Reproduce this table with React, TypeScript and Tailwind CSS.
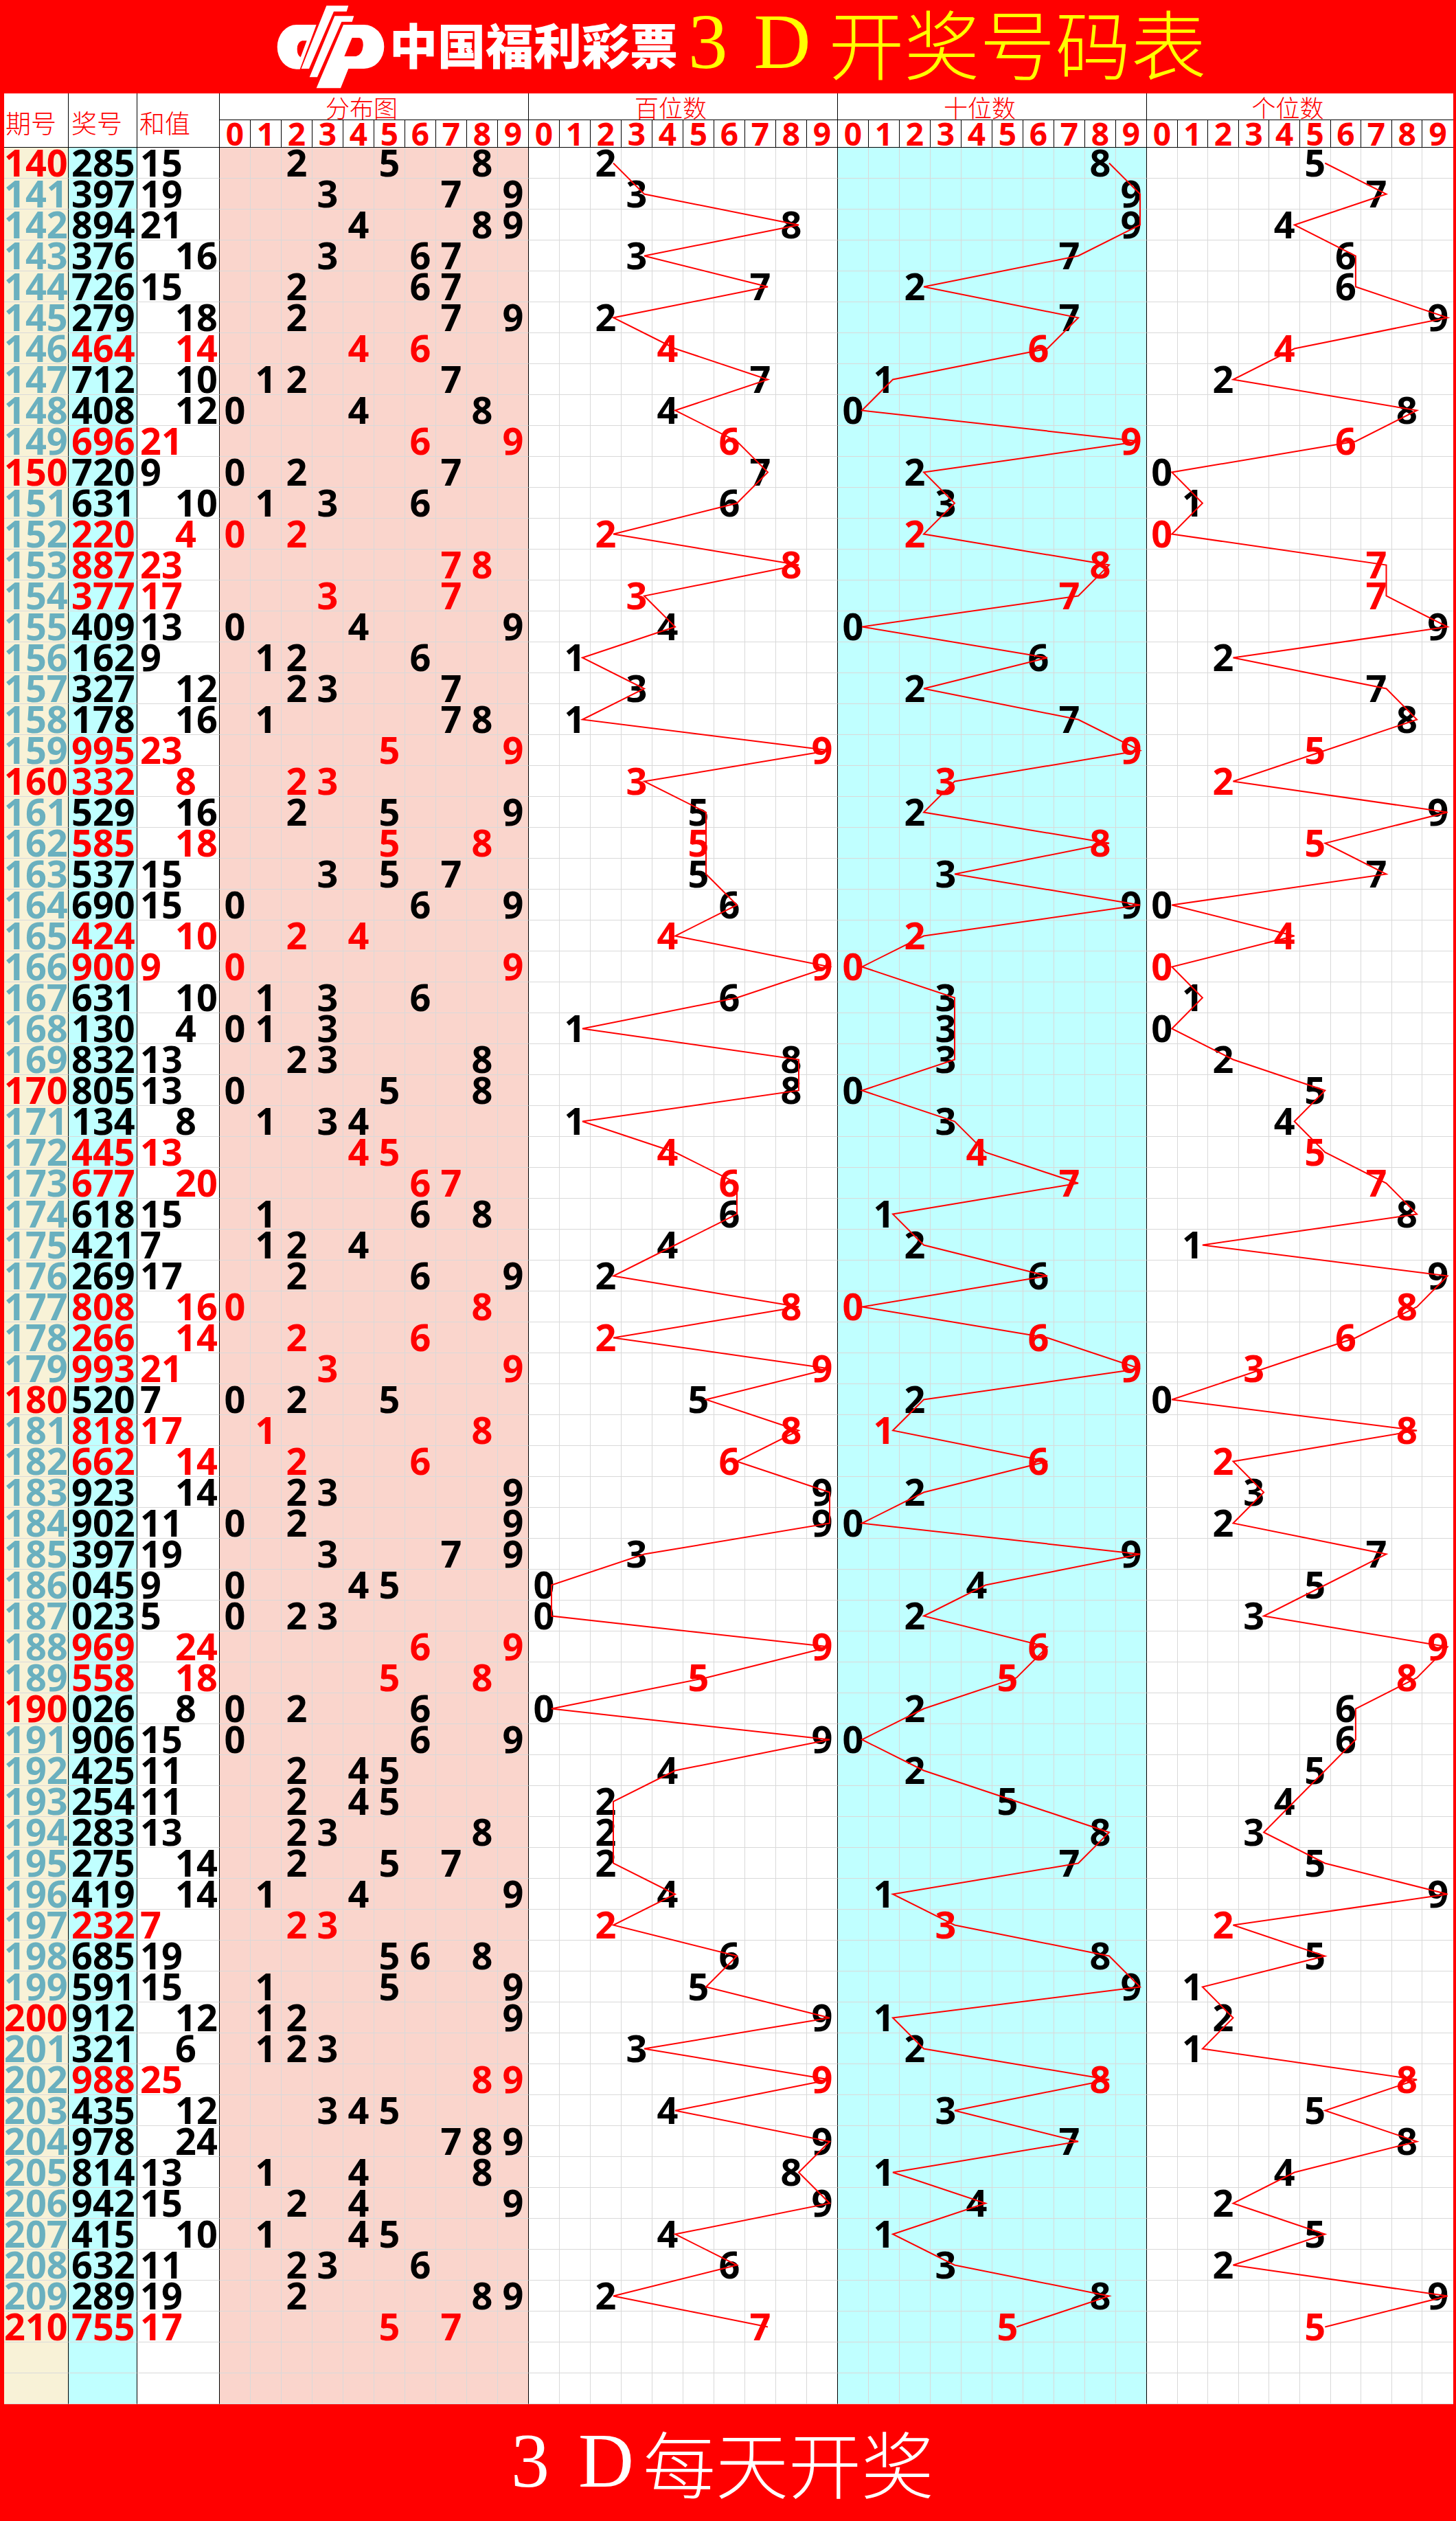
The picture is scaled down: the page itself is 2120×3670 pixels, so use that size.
import React from 'react';
import clsx from 'clsx';

// draws 140..210, one 3-digit result each
const NUMS =
  '285 397 894 376 726 279 464 712 408 696 720 631 220 887 377 409 162 327 178 995 332 529 585 537 690 424 900 631 130 832 805 134 445 677 618 421 269 808 266 993 520 818 662 923 902 397 045 023 969 558 026 906 425 254 283 275 419 232 685 591 912 321 988 435 978 814 942 415 632 289 755'.split(
    ' '
  );
const FIRST_ISSUE = 140;
const EMPTY_ROWS = 2;
const ROW_H = 45;

// left edge of each 10-column block, measured inside the table (table starts 6px in)
const BLOCK_X = [314, 764, 1214, 1664];
const CELL_W = [45, 45, 45, 44.6];
const LINE_NUDGE = [0, 10.5, 12.5, 14];

const NUM = "font-['Open_Sans','Liberation_Sans',sans-serif] font-bold";
const KAI = "font-['Noto_Sans_CJK_SC',sans-serif]";
const SERIF = "font-['Liberation_Serif','Noto_Sans_CJK_SC',serif]";

const BLOCKS = [
  { label: '分布图', bg: 'bg-[#fad5cc]' },
  { label: '百位数', bg: 'bg-white' },
  { label: '十位数', bg: 'bg-[#c0ffff]' },
  { label: '个位数', bg: 'bg-white' },
];
const DIGITS = [0, 1, 2, 3, 4, 5, 6, 7, 8, 9];

const Logo = () => (
  <svg viewBox="0 0 510 408" className="ml-[390px] h-[136px] w-[170px] shrink-0">
    <path d="M212,108 L125,108 A84 97 0 0 0 125,302 L140,302 Z" fill="#fff" />
    <path d="M170,178 L150,178 Q128,185 128,214 Q128,245 145,250 L143,250 Z" fill="#ff0000" />
    <path d="M256,25 L352,25 L344,50 L288,50 L180,300 L146,300 Z" fill="#fff" />
    <path d="M292,70 L376,70 L368,95 L322,95 L216,337 L182,337 Z" fill="#fff" />
    <path d="M330,108 L420,108 A88 96 0 0 1 420,300 L352,300 L318,385 L212,385 Z" fill="#fff" />
    <path d="M368,165 L400,165 Q418,170 416,200 Q412,240 385,246 L334,246 Z" fill="#ff0000" />
  </svg>
);

const TableHead = () => (
  <div className="flex h-[79px] border-b border-black bg-white">
    <div className={clsx(KAI, 'flex w-[94px] shrink-0 items-center border-r border-black pt-[7px] pl-[2px] text-[37px] leading-none font-light text-[#ff0000]')}>期号</div>
    <div className={clsx(KAI, 'flex w-[100px] shrink-0 items-center border-r border-black pt-[7px] pl-[4px] text-[37px] leading-none font-light text-[#ff0000]')}>奖号</div>
    <div className={clsx(KAI, 'flex w-[120px] shrink-0 items-center border-r border-black pt-[7px] pl-[3px] text-[37px] leading-none font-light text-[#ff0000]')}>和值</div>
    {BLOCKS.map((b, bi) => (
      <div key={b.label} className="flex flex-col">
        <div
          className={clsx(
            KAI,
            'flex h-[39px] items-center justify-center border-b border-black pr-[36px] text-[35px] leading-none font-light text-[#ff0000]',
            bi < 3 && 'border-r'
          )}
        >
          {b.label}
        </div>
        <div className="flex">
          {DIGITS.map((d) => (
            <div
              key={d}
              className={clsx(
                NUM,
                'flex h-[39px] shrink-0 justify-center text-[46px] leading-[39px] text-[#ff0000]',
                bi === 3 ? 'w-[44.6px]' : 'w-[45px]',
                bi === 3 && d === 9 ? 'border-r-0' : 'border-r border-r-black'
              )}
            >
              {d}
            </div>
          ))}
        </div>
      </div>
    ))}
  </div>
);

const DataRow = ({ num, issue }: { num?: string; issue?: number }) => {
  const ds = num ? num.split('').map(Number) : [];
  const pair = ds.length === 3 && new Set(ds).size < 3;
  const ink = pair ? 'text-[#ff0000]' : 'text-black';
  const sum = ds.reduce((a, b) => a + b, 0);
  const cell = 'h-[45px] shrink-0 border-b border-b-[#d9d9d9] leading-[42px] whitespace-nowrap';

  return (
    <div className={clsx('flex text-[54px]', NUM)}>
      <div
        className={clsx(
          cell,
          'w-[94px] border-r border-r-black bg-[#f8f2d7]',
          issue !== undefined && issue % 10 === 0 ? 'text-[#ff0000]' : 'text-[#6ab0bf]'
        )}
      >
        {issue}
      </div>
      <div className={clsx(cell, 'w-[100px] border-r border-r-black bg-[#c0ffff] pl-[4px]', ink)}>{num}</div>
      {/* odd sums sit in the left half of the column, even sums in the right half */}
      <div className={clsx(cell, 'w-[120px] border-r border-r-black bg-white', sum % 2 ? 'pl-[4px]' : 'pl-[55px]', ink)}>
        {num ? sum : ''}
      </div>
      {BLOCKS.map((b, bi) => (
        <div key={b.label} className="flex">
          {DIGITS.map((d) => {
            const show = bi === 0 ? ds.includes(d) : ds[bi - 1] === d;
            return (
              <div
                key={d}
                className={clsx(
                  cell,
                  'flex justify-center',
                  b.bg,
                  ink,
                  bi === 3 ? 'w-[44.6px]' : 'w-[45px]',
                  d < 9
                    ? 'border-r border-r-[#d9d9d9]'
                    : bi === 3
                      ? 'border-r-0'
                      : 'border-r border-r-black'
                )}
              >
                {show ? d : ''}
              </div>
            );
          })}
        </div>
      ))}
    </div>
  );
};

// red trend lines joining the digit of each position row to row
const TrendLines = () => {
  const lines = [1, 2, 3].map((bi) =>
    NUMS.map((n, i) => {
      const d = Number(n[bi - 1]);
      const x = BLOCK_X[bi] + d * CELL_W[bi] + CELL_W[bi] / 2 + LINE_NUDGE[bi];
      const y = i * ROW_H + ROW_H / 2;
      return `${x},${y}`;
    }).join(' ')
  );
  return (
    <svg
      className="pointer-events-none absolute left-0 top-0"
      width={2110}
      height={(NUMS.length + EMPTY_ROWS) * ROW_H}
    >
      {lines.map((pts, i) => (
        <polyline key={i} points={pts} fill="none" stroke="#ff0000" strokeWidth={2} />
      ))}
    </svg>
  );
};

const App = () => {
  return (
    <div className="w-[2120px] bg-[#ff0000]">
      <div className="flex h-[136px] items-start">
        <Logo />
        <span className={clsx(KAI, 'mt-[29px] ml-[7px] text-[70px] leading-none font-black whitespace-nowrap text-white')}>
          中国福利彩票
        </span>
        <span className={clsx(SERIF, 'mt-[3px] ml-[15px] text-[115px] leading-none text-[#ffff00]')}>3</span>
        <span className={clsx(SERIF, 'mt-[3px] ml-[38px] text-[115px] leading-none text-[#ffff00]')}>D</span>
        <span className={clsx(KAI, 'mt-[5px] ml-[26px] text-[110px] leading-none font-light whitespace-nowrap text-[#ffff00]')}>
          开奖号码表
        </span>
      </div>

      <div className="ml-[6px] mr-[4px] bg-white">
        <TableHead />
        <div className="relative">
          {NUMS.map((n, i) => (
            <DataRow key={i} num={n} issue={FIRST_ISSUE + i} />
          ))}
          {Array.from({ length: EMPTY_ROWS }, (_, i) => (
            <DataRow key={`e${i}`} />
          ))}
          <TrendLines />
        </div>
      </div>

      <div className="flex h-[170px] items-start text-white">
        <span className={clsx(SERIF, 'mt-[26px] ml-[744px] text-[112px] leading-none')}>3</span>
        <span className={clsx(SERIF, 'mt-[26px] ml-[42px] text-[112px] leading-none')}>D</span>
        <span className={clsx(KAI, 'mt-[30px] ml-[13px] text-[106px] leading-none font-light whitespace-nowrap')}>每天开奖</span>
      </div>
    </div>
  );
};

export default App;
